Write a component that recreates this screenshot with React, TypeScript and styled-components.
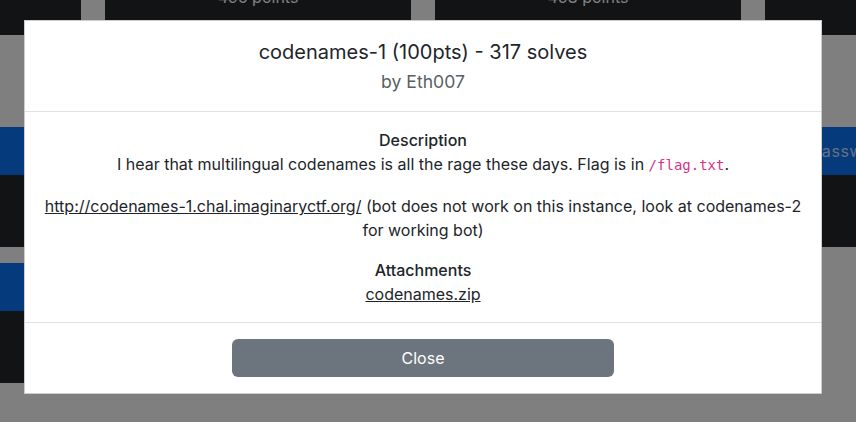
import React from "react";
import styled, { createGlobalStyle } from "styled-components";

const GlobalStyle = createGlobalStyle`
  html, body {
    margin: 0;
    padding: 0;
    background: #ffffff;
    font-family: Inter, "Noto Sans", sans-serif;
    color: #212529;
    overflow: hidden;
  }
  body {
    width: 856px;
    height: 422px;
  }
  * { box-sizing: border-box; }
`;

/* ---------- background page (challenge grid, scrolled) ---------- */

const Page = styled.div`
  display: flex;
  gap: 24px;
  margin-left: -225px;
  margin-top: -40px;
`;

const Column = styled.div`
  width: 306px;
  flex-shrink: 0;
  display: flex;
  flex-direction: column;
`;

const PointsCard = styled.div`
  height: 75px;
  background: #242628;
  display: flex;
  align-items: flex-end;
  justify-content: center;
  padding-bottom: 26px;
  color: #ffffff;
  font-size: 16px;
  line-height: 24px;
`;

const Challenge = styled.div<{ $top: number }>`
  margin-top: ${(p) => p.$top}px;
  display: flex;
  flex-direction: column;
`;

const FlagBar = styled.div`
  height: 48px;
  background: #0b74fb;
  display: flex;
  align-items: center;
  padding-left: 46px;
  color: rgba(255, 255, 255, 0.8);
  font-size: 16px;
  letter-spacing: 0.6px;
`;

const CardBody = styled.div`
  height: 72px;
  background: #242628;
`;

/* ---------- modal ---------- */

const Backdrop = styled.div`
  position: fixed;
  inset: 0;
  background: rgba(0, 0, 0, 0.5);
  padding-top: 20px;
`;

const Dialog = styled.div`
  width: 798px;
  margin-left: 24px;
  background: #ffffff;
  border: 1px solid rgba(0, 0, 0, 0.2);
  color: #212529;
`;

const Header = styled.div`
  padding: 16px;
  border-bottom: 1px solid #dee2e6;
  text-align: center;
`;

const Title = styled.h5`
  margin: 0;
  font-size: 20px;
  line-height: 30px;
  font-weight: 400;
`;

const Author = styled.div`
  margin-top: 1px;
  font-size: 17.6px;
  line-height: 27px;
  color: #595f65;
`;

const Body = styled.div`
  padding: 16px;
  text-align: center;
  font-size: 16px;
  line-height: 24px;
`;

const Section = styled.div`
  & + & {
    margin-top: 16px;
  }
`;

const SectionTitle = styled.div`
  font-weight: 450;
`;

const Para = styled.p<{ $last?: boolean }>`
  margin: 0 0 ${(p) => (p.$last ? 0 : 17)}px;
`;

const Code = styled.code`
  font-family: "DejaVu Sans Mono", "Liberation Mono", monospace;
  font-size: 0.875em;
  color: #d63384;
`;

const Link = styled.a`
  color: #212529;
  text-decoration: underline;
`;

const Footer = styled.div`
  padding: 16px;
  border-top: 1px solid #dee2e6;
  display: flex;
  justify-content: center;
`;

const CloseButton = styled.button`
  width: 50%;
  height: 38px;
  border: none;
  border-radius: 6px;
  background: #6c757d;
  color: #ffffff;
  font-family: Inter, "Noto Sans", sans-serif;
  font-size: 16px;
  line-height: 24px;
  cursor: pointer;
`;

export default function App() {
  return (
    <>
      <GlobalStyle />
      <Page>
        <Column>
          <PointsCard>490 points</PointsCard>
          <Challenge $top={92}>
            <FlagBar />
            <CardBody />
          </Challenge>
          <Challenge $top={16}>
            <FlagBar />
            <CardBody />
          </Challenge>
        </Column>
        <Column>
          <PointsCard>495 points</PointsCard>
        </Column>
        <Column>
          <PointsCard>498 points</PointsCard>
        </Column>
        <Column>
          <PointsCard>499 points</PointsCard>
          <Challenge $top={92}>
            <FlagBar>Password</FlagBar>
            <CardBody />
          </Challenge>
        </Column>
      </Page>
      <Backdrop>
        <Dialog role="dialog">
          <Header>
            <Title>codenames-1 (100pts) - 317 solves</Title>
            <Author>by Eth007</Author>
          </Header>
          <Body>
            <Section>
              <SectionTitle>Description</SectionTitle>
              <Para>
                I hear that multilingual codenames is all the rage these days. Flag is in{" "}
                <Code>/flag.txt</Code>.
              </Para>
              <Para $last>
                <Link href="#">http://codenames-1.chal.imaginaryctf.org/</Link> (bot does not
                work on this instance, look at codenames-2 for working bot)
              </Para>
            </Section>
            <Section>
              <SectionTitle>Attachments</SectionTitle>
              <Link href="#">codenames.zip</Link>
            </Section>
          </Body>
          <Footer>
            <CloseButton>Close</CloseButton>
          </Footer>
        </Dialog>
      </Backdrop>
    </>
  );
}
